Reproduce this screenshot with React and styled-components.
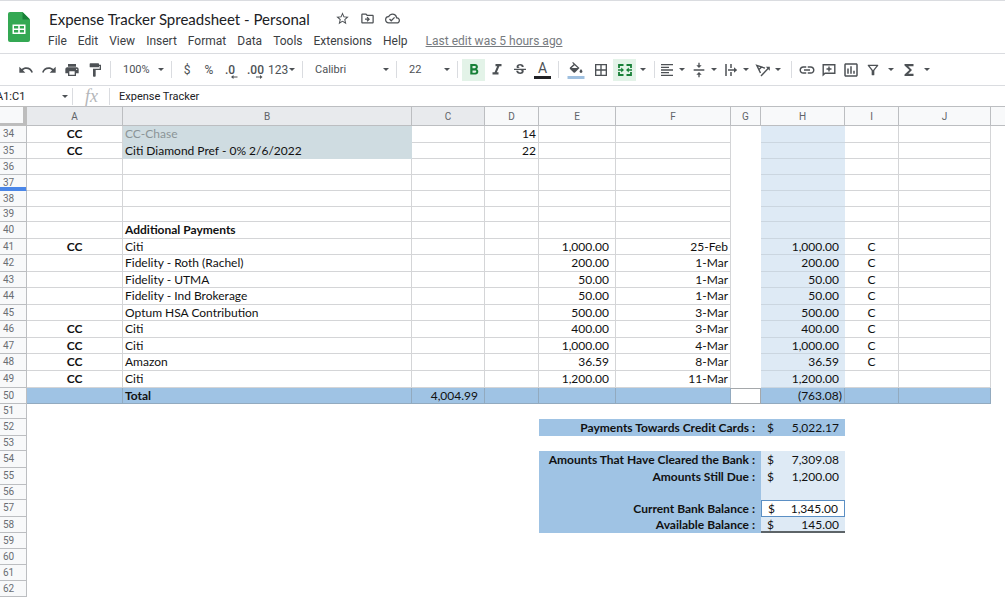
import React from "react";
import styled, { createGlobalStyle, css } from "styled-components";
import {
  MdUndo,
  MdRedo,
  MdPrint,
  MdFormatPaint,
  MdFormatBold,
  MdFormatItalic,
  MdStrikethroughS,
  MdBorderAll,
  MdFormatAlignLeft,
  MdVerticalAlignCenter,
  MdLink,
  MdOutlineInsertChart,
  MdOutlineFilterAlt,
  MdFunctions,
  MdStarBorder,
  MdOutlineDriveFileMove,
  MdOutlineCloudDone,
} from "react-icons/md";

const colors = {
  icon: "#4d5155",
  text: "#3c4043",
  line: "#dadce0",
  grid: "#d4d5d7",
  gridDark: "#bcbec1",
  header: "#f8f9fa",
  headerActive: "#e8eaed",
  blue: "#9fc3e4",
  lightBlue: "#deeaf5",
  card: "#cfdce1",
  green: "#188038",
  greenLight: "#e3f3e8",
};

const GlobalStyle = createGlobalStyle`
  * {
    box-sizing: border-box;
  }
  body {
    margin: 0;
    background: #fff;
    font-family: Roboto, "Liberation Sans", sans-serif;
    color: ${colors.text};
  }
  button, input, select {
    font: inherit;
    color: inherit;
    border: 0;
    padding: 0;
    background: none;
    outline: none;
  }
`;

const Page = styled.div`
  min-width: 1000px;
  overflow: hidden;
  border-top: 1px solid ${colors.line};
`;

const Header = styled.header`
  display: flex;
  height: 52px;
  padding: 11px 8px 0;
  gap: 16px;
`;

const HeaderText = styled.div`
  display: flex;
  flex-direction: column;
  margin-top: -4px;
`;

const TitleRow = styled.div`
  display: flex;
  align-items: center;
  gap: 10px;
  height: 21px;
  padding-left: 3px;
`;

const Title = styled.h1`
  margin: 0 15px 0 0;
  font-family: Lato, Roboto, sans-serif;
  font-size: 15px;
  font-weight: 400;
  color: #202124;
  white-space: nowrap;
`;

const TitleButton = styled.button`
  display: flex;
  width: 15px;
  font-size: 15px;
  color: ${colors.icon};
`;

const Menu = styled.nav`
  display: flex;
  align-items: center;
  gap: 11px;
  height: 23px;
  padding-left: 2px;
  font-size: 12px;
`;

const EditLink = styled.a`
  margin-left: 7px;
  color: #777b80;
  white-space: nowrap;
`;

const Toolbar = styled.div`
  display: flex;
  align-items: center;
  height: 33px;
  padding-left: 14px;
  border-top: 1px solid ${colors.line};
  border-bottom: 1px solid ${colors.line};
  color: ${colors.icon};
`;

const ToolButton = styled.button`
  display: flex;
  flex: none;
  align-items: center;
  justify-content: center;
  width: ${(props) => props.$width || 23}px;
  height: 22px;
  font-size: 12px;

  svg {
    flex: none;
    width: ${(props) => (props.$large ? 18 : 16)}px;
    height: ${(props) => (props.$large ? 18 : 16)}px;
    overflow: visible;
  }

  ${(props) =>
    props.$active &&
    css`
      background: ${colors.greenLight};
      color: ${colors.green};
    `}
`;

const MenuButton = styled(ToolButton)`
  justify-content: flex-start;
  gap: ${(props) => props.$gap || 4}px;
`;

const Separator = styled.span`
  flex: none;
  width: 1px;
  height: 17px;
  margin: 0 4px;
  background: ${colors.line};
`;

const Caret = styled.span`
  flex: none;
  border: 3px solid transparent;
  border-top-color: ${colors.icon};
  border-bottom: 0;
`;

const SelectBox = styled.label`
  display: flex;
  flex: none;
  align-items: center;
  width: ${(props) => props.$width}px;
  padding: 0 3px 0 8px;
  font-size: 11px;
`;

const Select = styled.select`
  flex: 1;
  min-width: 0;
  appearance: none;
`;

const LetterMark = styled.span`
  display: flex;
  justify-content: center;
  width: 17px;
  height: 18px;
  border-bottom: 3px solid #202124;
  font-size: 14px;
  line-height: 14px;
`;

const FormulaBar = styled.div`
  display: flex;
  align-items: center;
  height: 20px;
  font-size: 11px;
  color: #202124;
`;

const NameBox = styled.input`
  width: 62px;
  text-indent: -4px;
`;

const Fx = styled.span`
  width: 28px;
  padding-left: 8px;
  font-family: "Liberation Serif", serif;
  font-size: 18px;
  font-style: italic;
  line-height: 18px;
  color: #b4b6b9;
`;

const FormulaInput = styled.input`
  flex: 1;
  padding-left: 5px;
`;

const Sheet = styled.table`
  width: 100%;
  table-layout: fixed;
  border-collapse: separate;
  border-spacing: 0;
  font-family: Lato, "Open Sans", sans-serif;
  font-size: 12px;
  line-height: 14px;
  color: #111;
`;

const Col = styled.col`
  width: ${(props) => (props.$width ? `${props.$width}px` : "auto")};
`;

const ColumnHeader = styled.th`
  height: 20px;
  padding: 0;
  border: solid ${colors.gridDark};
  border-width: 1px 1px 1px 0;
  background: ${(props) => (props.$active ? colors.headerActive : colors.header)};
  font: 400 10px Roboto, sans-serif;
  color: #5f6368;

  &:last-child {
    border-right: 0;
  }
`;

const Corner = styled.th`
  padding: 0;
  border: solid #bdbdbd;
  border-width: 1px 4px 3px 0;
  background: ${colors.header};
`;

const RowHeader = styled.th`
  height: ${(props) => props.$height}px;
  padding: 0 0 0 3px;
  border-right: 1px solid ${colors.gridDark};
  border-bottom: 1px solid ${(props) => (props.$frozen ? "#4a86e8" : colors.gridDark)};
  background: ${colors.header};
  box-shadow: ${(props) => (props.$frozen ? "inset 0 -3px #4a86e8" : "none")};
  font: 400 10px/12px Roboto, sans-serif;
  text-align: left;
  color: #6a6e73;
`;

const Cell = styled.td`
  padding: 0 ${(props) => props.$pad ?? 2}px;
  overflow: hidden;
  white-space: nowrap;
  text-align: ${(props) => props.$align || "left"};
  font-weight: ${(props) => (props.$bold ? 700 : 400)};
  background: ${(props) => props.$bg || "transparent"};
  color: ${(props) => props.$color || "inherit"};

  ${(props) =>
    props.$grid &&
    css`
      border-right: 1px solid ${props.$grid};
      border-bottom: 1px solid ${props.$grid};
    `}
`;

const TintCell = styled(Cell)`
  border-bottom: 1px solid #cbd6e0;
`;

const GapCell = styled(Cell)`
  border: solid #a5a8ab;
  border-width: 1px 1px 1px 0;
`;

const MoneyCell = styled(Cell)`
  padding: 0 6px;
  ${(props) => props.$boxed && "border: 1px solid #5b8fc4;"}
  ${(props) => props.$total && "border-bottom: 2px solid #5d6468;"}
`;

const Money = styled.div`
  display: flex;
  justify-content: space-between;
  line-height: 13px;
`;

const columns = [
  { name: "A", width: 96, active: true },
  { name: "B", width: 289, active: true },
  { name: "C", width: 73, active: true },
  { name: "D", width: 54 },
  { name: "E", width: 77 },
  { name: "F", width: 115 },
  { name: "G", width: 30 },
  { name: "H", width: 84 },
  { name: "I", width: 54 },
  { name: "J", width: 92 },
  { name: "" },
];

const entries = [
  { row: 34, height: 17, type: "CC", name: "CC-Chase", day: "14", card: true, faded: true },
  { row: 35, type: "CC", name: "Citi Diamond Pref - 0% 2/6/2022", day: "22", card: true },
  { row: 36 },
  { row: 37, frozen: true },
  { row: 38 },
  { row: 39, height: 15 },
  { row: 40, height: 17, name: "Additional Payments", bold: true },
  { row: 41, type: "CC", name: "Citi", amount: "1,000.00", date: "25-Feb", paid: "1,000.00", status: "C" },
  { row: 42, height: 17, name: "Fidelity - Roth (Rachel)", amount: "200.00", date: "1-Mar", paid: "200.00", status: "C" },
  { row: 43, name: "Fidelity - UTMA", amount: "50.00", date: "1-Mar", paid: "50.00", status: "C" },
  { row: 44, height: 17, name: "Fidelity - Ind Brokerage", amount: "50.00", date: "1-Mar", paid: "50.00", status: "C" },
  { row: 45, name: "Optum HSA Contribution", amount: "500.00", date: "3-Mar", paid: "500.00", status: "C" },
  { row: 46, height: 17, type: "CC", name: "Citi", amount: "400.00", date: "3-Mar", paid: "400.00", status: "C" },
  { row: 47, type: "CC", name: "Citi", amount: "1,000.00", date: "4-Mar", paid: "1,000.00", status: "C" },
  { row: 48, height: 17, type: "CC", name: "Amazon", amount: "36.59", date: "8-Mar", paid: "36.59", status: "C" },
  { row: 49, height: 17, type: "CC", name: "Citi", amount: "1,200.00", date: "11-Mar", paid: "1,200.00" },
];

const summary = [
  { row: 51, height: 15 },
  { row: 52, height: 17, label: "Payments Towards Credit Cards :", value: "5,022.17", bg: colors.blue },
  { row: 53, height: 15 },
  { row: 54, height: 17, label: "Amounts That Have Cleared the Bank :", value: "7,309.08", bg: colors.lightBlue },
  { row: 55, height: 17, label: "Amounts Still Due :", value: "1,200.00", bg: colors.lightBlue },
  { row: 56, height: 15, label: " ", bg: colors.lightBlue },
  { row: 57, height: 17, label: "Current Bank Balance :", value: "1,345.00", bg: "#fff", boxed: true },
  { row: 58, label: "Available Balance :", value: "145.00", bg: colors.lightBlue, total: true },
  { row: 59 },
  { row: 60 },
  { row: 61 },
  { row: 62 },
];

const menuItems = ["File", "Edit", "View", "Insert", "Format", "Data", "Tools", "Extensions", "Help"];

function Logo() {
  return (
    <svg width="22" height="30" viewBox="0 0 22 30" aria-label="Sheets">
      <path d="M2 0h12.500L22 7.500V28a2 2 0 0 1-2 2H2a2 2 0 0 1-2-2V2a2 2 0 0 1 2-2z" fill="#34a853" />
      <path d="M14.500 0 22 7.500h-7.500z" fill="#188038" />
      <path d="M4.500 12.500h13v9.500h-13zM6 14v2.400h4.200V14zM11.800 14v2.400H16V14zM6 18v2.500h4.200V18zM11.800 18v2.500H16V18z" fill="#fff" fillRule="evenodd" />
    </svg>
  );
}

function DecimalIcon({ text, more }) {
  return (
    <svg viewBox="0 0 16 16">
      <text x={more ? 0 : 2} y="12" fontSize="12" fontWeight="500" fill="currentColor">{text}</text>
      {more ? (
        <path d="M9 14.500h4v-1.500l2.500 2-2.500 2v-1.500H9z" fill="currentColor" />
      ) : (
        <path d="M14.500 14.500h-4v-1.500l-2.500 2 2.500 2v-1.500h4z" fill="currentColor" />
      )}
    </svg>
  );
}

function FillIcon() {
  return (
    <svg viewBox="0 0 16 16">
      <path d="M5 0 11.500 6 7 10.500a1 1 0 0 1-1.400 0L2 7a1 1 0 0 1 0-1.400L5.600 2.200 4.200.800zM6.600 3.200 3.600 6h6z" fill="currentColor" fillRule="evenodd" />
      <path d="M13 7s1.400 1.700 1.400 2.600a1.400 1.400 0 0 1-2.800 0C11.600 8.700 13 7 13 7z" fill="currentColor" />
      <path d="M-.5 14h17v3H-.5z" fill="#9fc0e0" />
    </svg>
  );
}

function MergeIcon() {
  return (
    <svg viewBox="0 0 16 16" fill="none" stroke="currentColor" strokeWidth="1.800">
      <path d="M6.500 3H2v3M2 10v3h4.500M9.500 3H14v3M14 10v3H9.500" />
      <path d="M1 8h4M15 8h-4" strokeWidth="1.500" />
      <path d="M4.200 5.600 7 8l-2.800 2.400zM11.800 5.600 9 8l2.800 2.400z" fill="currentColor" stroke="none" />
    </svg>
  );
}

function WrapIcon() {
  return (
    <svg viewBox="0 0 16 16" fill="none" stroke="currentColor" strokeWidth="1.500">
      <path d="M3 2v12M8 2v4M8 10v4M5 8h7" />
      <path d="M11 5.200 14.200 8 11 10.800z" fill="currentColor" stroke="none" />
    </svg>
  );
}

function RotateIcon() {
  return (
    <svg viewBox="0 0 16 16" fill="none" stroke="currentColor" strokeWidth="1.400">
      <path d="M5.500 11 1.800 3.400 10 6.200M4 7.600 6.300 5.200" />
      <path d="M6 14 13.500 6" />
      <path d="M10.800 4.800h4v4z" fill="currentColor" stroke="none" />
    </svg>
  );
}

function CommentIcon() {
  return (
    <svg viewBox="0 0 16 16" fill="none" stroke="currentColor" strokeWidth="1.400">
      <path d="M2.200 13V2.700h11.600v8.600H4z" />
      <path d="M8 4.500v5M5.500 7h5" />
    </svg>
  );
}

function ToolSelect({ label, value, width }) {
  return (
    <SelectBox $width={width}>
      <Select aria-label={label} defaultValue={value}>
        <option>{value}</option>
      </Select>
      <Caret />
    </SelectBox>
  );
}

function EntryRow({ entry }) {
  const grid = colors.grid;
  return (
    <tr>
      <RowHeader scope="row" $height={entry.height || 16} $frozen={entry.frozen}>{entry.row}</RowHeader>
      <Cell $grid={grid} $align="center" $bold>{entry.type}</Cell>
      <Cell
        $grid={entry.card ? colors.card : grid}
        $bg={entry.card && colors.card}
        $color={entry.faded && "#8b9497"}
        $bold={entry.bold}
      >
        {entry.name}
      </Cell>
      <Cell $grid={grid} />
      <Cell $grid={grid} $align="right">{entry.day}</Cell>
      <Cell $grid={grid} $align="right" $pad={6}>{entry.amount}</Cell>
      <Cell $grid={grid} $align="right">{entry.date}</Cell>
      <Cell />
      <TintCell $bg={colors.lightBlue} $align="right" $pad={6}>{entry.paid}</TintCell>
      <Cell $grid={grid} $align="center">{entry.status}</Cell>
      <Cell $grid={grid} />
      <Cell />
    </tr>
  );
}

function TotalRow() {
  const style = { $grid: "#92aabf", $bg: colors.blue };
  return (
    <tr>
      <RowHeader scope="row" $height={16}>50</RowHeader>
      <Cell {...style} />
      <Cell {...style} $bold>Total</Cell>
      <Cell {...style} $align="right" $pad={6}>4,004.99</Cell>
      <Cell {...style} />
      <Cell {...style} />
      <Cell {...style} />
      <GapCell />
      <Cell {...style} $align="right">(763.08)</Cell>
      <Cell {...style} />
      <Cell {...style} />
      <Cell />
    </tr>
  );
}

function SummaryRow({ item }) {
  return (
    <tr>
      <RowHeader scope="row" $height={item.height || 16}>{item.row}</RowHeader>
      <Cell colSpan={4} />
      <Cell colSpan={3} $align="right" $pad={6} $bold $bg={item.label && colors.blue}>{item.label}</Cell>
      <MoneyCell $bg={item.bg} $boxed={item.boxed} $total={item.total}>
        {item.value && (
          <Money>
            <span>$</span>
            <span>{item.value}</span>
          </Money>
        )}
      </MoneyCell>
      <Cell colSpan={3} />
    </tr>
  );
}

export default function App() {
  return (
    <Page>
      <GlobalStyle />
      <Header>
        <Logo />
        <HeaderText>
          <TitleRow>
            <Title>Expense Tracker Spreadsheet - Personal</Title>
            <TitleButton aria-label="Star"><MdStarBorder /></TitleButton>
            <TitleButton aria-label="Move"><MdOutlineDriveFileMove /></TitleButton>
            <TitleButton aria-label="Saved to Drive"><MdOutlineCloudDone /></TitleButton>
          </TitleRow>
          <Menu>
            {menuItems.map((item) => (
              <button key={item}>{item}</button>
            ))}
            <EditLink href="#history">Last edit was 5 hours ago</EditLink>
          </Menu>
        </HeaderText>
      </Header>

      <Toolbar>
        <ToolButton aria-label="Undo"><MdUndo /></ToolButton>
        <ToolButton aria-label="Redo"><MdRedo /></ToolButton>
        <ToolButton aria-label="Print"><MdPrint /></ToolButton>
        <ToolButton aria-label="Paint format"><MdFormatPaint /></ToolButton>
        <Separator />
        <ToolSelect label="Zoom" value="100%" width={52} />
        <Separator />
        <ToolButton $width={22}>$</ToolButton>
        <ToolButton $width={22}>%</ToolButton>
        <ToolButton $width={22} aria-label="Decrease decimal places"><DecimalIcon text=".0" /></ToolButton>
        <ToolButton $width={26} aria-label="Increase decimal places"><DecimalIcon text=".00" more /></ToolButton>
        <MenuButton $width={30} $gap={1}>123<Caret /></MenuButton>
        <Separator />
        <ToolSelect label="Font" value="Calibri" width={85} />
        <Separator />
        <ToolSelect label="Font size" value="22" width={52} />
        <Separator />
        <ToolButton $active $large aria-label="Bold"><MdFormatBold /></ToolButton>
        <ToolButton $large aria-label="Italic"><MdFormatItalic /></ToolButton>
        <ToolButton aria-label="Strikethrough"><MdStrikethroughS /></ToolButton>
        <ToolButton aria-label="Text color"><LetterMark>A</LetterMark></ToolButton>
        <Separator />
        <ToolButton $width={25} aria-label="Fill color"><FillIcon /></ToolButton>
        <ToolButton $width={25} aria-label="Borders"><MdBorderAll /></ToolButton>
        <ToolButton $active aria-label="Merge cells"><MergeIcon /></ToolButton>
        <ToolButton $width={14} aria-label="Merge type"><Caret /></ToolButton>
        <Separator />
        <MenuButton $width={32} aria-label="Horizontal align"><MdFormatAlignLeft /><Caret /></MenuButton>
        <MenuButton $width={32} aria-label="Vertical align"><MdVerticalAlignCenter /><Caret /></MenuButton>
        <MenuButton $width={32} aria-label="Text wrapping"><WrapIcon /><Caret /></MenuButton>
        <MenuButton $width={32} aria-label="Text rotation"><RotateIcon /><Caret /></MenuButton>
        <Separator />
        <ToolButton $width={22} $large aria-label="Insert link"><MdLink /></ToolButton>
        <ToolButton $width={22} aria-label="Insert comment"><CommentIcon /></ToolButton>
        <ToolButton $width={22} $large aria-label="Insert chart"><MdOutlineInsertChart /></ToolButton>
        <ToolButton $width={22} aria-label="Filter"><MdOutlineFilterAlt /></ToolButton>
        <ToolButton $width={14} aria-label="Filter views"><Caret /></ToolButton>
        <ToolButton $width={22} $large aria-label="Functions"><MdFunctions /></ToolButton>
        <ToolButton $width={14} aria-label="More functions"><Caret /></ToolButton>
      </Toolbar>

      <FormulaBar>
        <NameBox aria-label="Name box" defaultValue="A1:C1" />
        <Caret />
        <Separator />
        <Fx>fx</Fx>
        <Separator />
        <FormulaInput aria-label="Formula" defaultValue="Expense Tracker" />
      </FormulaBar>

      <Sheet>
        <colgroup>
          <Col $width={27} />
          {columns.map((column) => (
            <Col key={column.name} $width={column.width} />
          ))}
        </colgroup>
        <thead>
          <tr>
            <Corner />
            {columns.map((column) => (
              <ColumnHeader key={column.name} $active={column.active}>{column.name}</ColumnHeader>
            ))}
          </tr>
        </thead>
        <tbody>
          {entries.map((entry) => (
            <EntryRow key={entry.row} entry={entry} />
          ))}
          <TotalRow />
          {summary.map((item) => (
            <SummaryRow key={item.row} item={item} />
          ))}
        </tbody>
      </Sheet>
    </Page>
  );
}
